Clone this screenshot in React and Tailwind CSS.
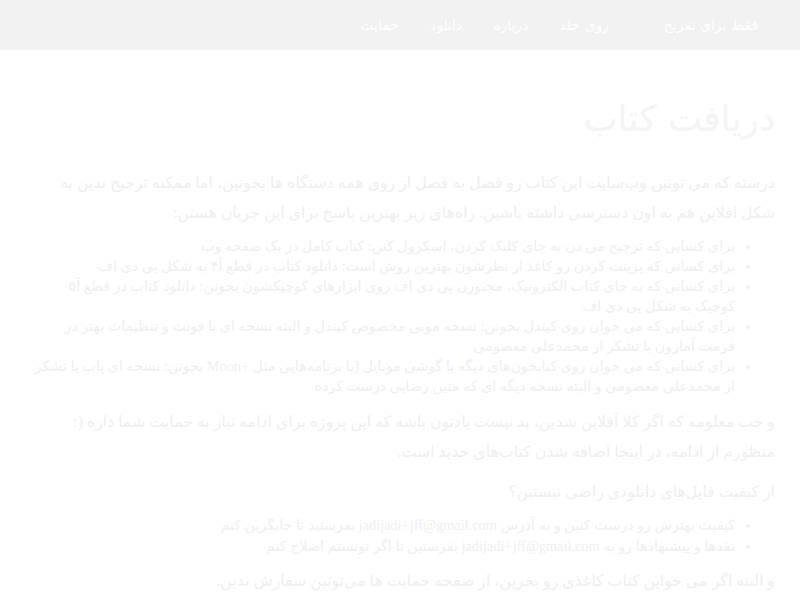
import React from "react";

const navLinks = ["روی جلد", "درباره", "دانلود", "حمایت"];

const offlineWays = [
  "برای کسایی که ترجیح می دن به جای کلیک کردن، اسکرول کنن: کتاب کامل در یک صفحه وب",
  "برای کسانی که پرینت کردن رو کاغذ از نظرشون بهترین روش است: دانلود کتاب در قطع آ۴ به شکل پی دی اف",
  "برای کسانی که به جای کتاب الکترونیک، مجبورن پی دی اف روی ابزارهای کوچیکشون بخونن: دانلود کتاب در قطع آ۵ کوچیک به شکل پی دی اف",
  "برای کسایی که می خوان روی کیندل بخونن: نسخه موبی مخصوص کیندل و البته نسخه ای با فونت و تنظیمات بهتر در فرمت آمازون با تشکر از محمدعلی معصومی",
  "برای کسانی که می خوان روی کتابخون‌های دیگه یا گوشی موبایل [یا برنامه‌هایی مثل +Moon بخونن: نسخه ای پاب با تشکر از محمدعلی معصومی و البته نسخه دیگه ای که متین رضایی درست کرده",
];

const feedback = [
  "کیفیت بهترش رو درست کنین و به آدرس jadijadi+jff@gmail.com بفرستید تا جایگزین کنم",
  "نقدها و پیشنهادها رو به jadijadi+jff@gmail.com بفرستین تا اگر تونستم اصلاح کنم",
];

export default function App() {
  return (
    <div
      dir="rtl"
      className="min-h-screen w-full bg-white text-[#efefef] font-['Liberation_Serif','DejaVu_Sans',serif]"
    >
      {/* navbar */}
      <nav className="h-[50px] bg-[#f2f2f2] flex items-center pr-[42px] gap-[31px] text-white font-['DejaVu_Sans',sans-serif]">
        <span className="text-[14px] ml-[24px]">فقط برای تفریح</span>
        {navLinks.map((l) => (
          <a key={l} className="text-[14px]">
            {l}
          </a>
        ))}
      </nav>

      <main className="pr-[25px] pl-[32px]">
        <h1 className="mt-[45px] mb-[25px] text-[36px] leading-[48px] text-[#f4f4f4] font-['DejaVu_Sans',sans-serif]">
          دریافت کتاب
        </h1>

        <p className="text-[15.8px] leading-[30px]">
          درسته که می تونین وب‌سایت این کتاب رو فصل به فصل از روی همه دستگاه ها بخونین، اما ممکنه ترجیح بدین به شکل افلاین هم به اون دسترسی داشته باشین. راه‌های زیر بهترین پاسخ برای این جریان هستن:
        </p>

        <ul className="list-disc pr-[40px] mt-[8px] text-[14.3px] leading-[20px]">
          {offlineWays.map((w) => (
            <li key={w}>{w}</li>
          ))}
        </ul>

        <p className="mt-[11px] text-[15.8px] leading-[30px]">
          و خب معلومه که اگر کلا آفلاین شدین، بد نیست یادتون باشه که این پروژه برای ادامه نیاز به حمایت شما داره (: منظورم از ادامه، در اینجا اضافه شدن کتاب‌های جدید است.
        </p>

        <p className="mt-[10px] text-[15.8px] leading-[30px]">از کیفیت فایل‌های دانلودی راضی نیستین؟</p>

        <ul className="list-disc pr-[40px] mt-[8px] text-[14.3px] leading-[21px]">
          {feedback.map((f) => (
            <li key={f}>{f}</li>
          ))}
        </ul>

        <p className="mt-[9px] text-[15.8px] leading-[30px]">
          و البته اگر می خواین کتاب کاغذی رو بخرین، از صفحه حمایت ها می‌تونین سفارش بدین.
        </p>
      </main>
    </div>
  );
}
